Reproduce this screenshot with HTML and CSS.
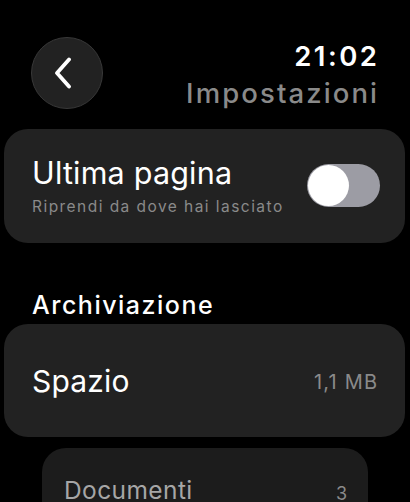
FILE: index.html
```html
<!DOCTYPE html>
<html>
<head>
<meta charset="utf-8">
<link rel="stylesheet" href="styles.css">
</head>
<body>
<div class="screen">
  <header class="header">
    <button class="back" aria-label="Indietro">
      <svg width="20" height="32" viewBox="0 0 20 32"><path d="M16 2.5 L4 16 L16 29.5" fill="none" stroke="#fff" stroke-width="3.8" stroke-linecap="round" stroke-linejoin="round"/></svg>
    </button>
    <div class="titles">
      <div class="time">21:02</div>
      <div class="title">Impostazioni</div>
    </div>
  </header>

  <section class="card card-toggle">
    <div class="texts">
      <div class="label">Ultima pagina</div>
      <div class="sub">Riprendi da dove hai lasciato</div>
    </div>
    <div class="toggle"><div class="knob"></div></div>
  </section>

  <h2 class="section">Archiviazione</h2>

  <section class="card card-row">
    <div class="label">Spazio</div>
    <div class="value">1,1 MB</div>
  </section>

  <section class="card card-sub">
    <div class="label-sub">Documenti</div>
    <div class="value-sub">3</div>
  </section>
</div>
</body>
</html>
```

FILE: styles.css
```css
html, body {
  margin: 0;
  padding: 0;
  background: #000;
}
body {
  font-family: Inter, "Noto Sans", sans-serif;
  color: #fff;
  width: 410px;
  height: 502px;
  overflow: hidden;
}
.screen {
  display: flex;
  flex-direction: column;
  height: 502px;
  overflow: hidden;
}
.header {
  display: flex;
  justify-content: space-between;
  align-items: flex-start;
  padding: 37px 33px 0 31px;
}
.back {
  width: 72px;
  height: 72px;
  border-radius: 50%;
  background: #222222;
  border: 1px solid #383838;
  box-sizing: border-box;
  display: flex;
  align-items: center;
  justify-content: center;
  padding: 0 8px 0 0;
  margin: 0;
}
.titles {
  text-align: right;
  margin-top: 2px;
}
.time {
  font-size: 27.5px;
  font-weight: 600;
  line-height: 34px;
  letter-spacing: 2.5px;
  margin-right: -2.5px;
}
.title {
  font-size: 27.5px;
  font-weight: 500;
  line-height: 34px;
  margin-top: 3px;
  color: #8a8a8a;
  letter-spacing: 2.1px;
  margin-right: -2.1px;
}
.card {
  background: #222222;
  border-radius: 24px;
  margin: 0 5px 0 4px;
  box-sizing: border-box;
  flex: none;
}
.card-toggle {
  margin-top: 19px;
  height: 114px;
  display: flex;
  align-items: flex-start;
  justify-content: space-between;
  padding: 26px 25px 0 28px;
}
.label {
  font-size: 30.5px;
  font-weight: 400;
  line-height: 36px;
  letter-spacing: 0.2px;
}
.sub {
  font-size: 15.5px;
  color: #8a8a8a;
  line-height: 20px;
  margin-top: 6px;
  letter-spacing: 1.45px;
}
.toggle {
  width: 73px;
  height: 43px;
  border-radius: 22px;
  background: #9c9ca4;
  position: relative;
  margin-top: 9px;
  flex: none;
}
.knob {
  position: absolute;
  left: 1px;
  top: 1px;
  width: 41px;
  height: 41px;
  border-radius: 50%;
  background: #fff;
}
.section {
  margin: 47px 0 0 32px;
  font-size: 25px;
  font-weight: 500;
  line-height: 30px;
  letter-spacing: 1.5px;
  height: 30px;
  flex: none;
}
.card-row {
  margin-top: 4px;
  height: 113px;
  display: flex;
  align-items: center;
  justify-content: space-between;
  padding: 0 28px 0 28px;
}
.card-row .label {
  font-size: 30px;
}
.value {
  font-size: 20px;
  color: #8a8a8a;
  letter-spacing: 1.2px;
  margin-right: -1.2px;
  margin-top: 2px;
}
.card-sub {
  margin: 11px 42px 0 42px;
  height: 100px;
  background: #1c1c1c;
  display: flex;
  justify-content: space-between;
  align-items: flex-start;
  padding: 27px 21px 0 22px;
}
.label-sub {
  font-size: 24.5px;
  color: #a6a6a6;
  line-height: 30px;
  letter-spacing: 0.4px;
}
.value-sub {
  font-size: 18px;
  color: #8a8a8a;
  line-height: 30px;
  margin-top: 4px;
}
```
